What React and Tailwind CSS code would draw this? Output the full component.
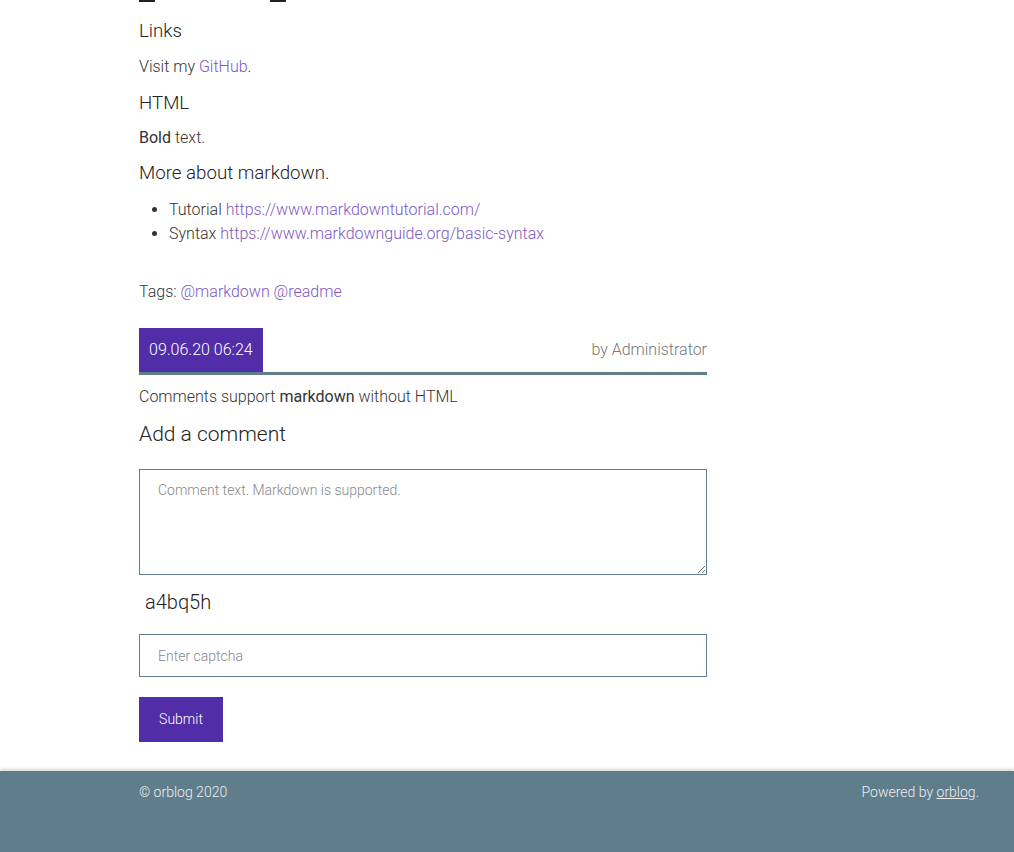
import React from 'react';

const linkCls = 'text-[#7e57c2] hover:underline';

export default function App() {
  return (
    <div className="min-h-[852px] flex flex-col bg-white font-['Roboto',sans-serif] font-light text-[#333]">
      <main className="flex-1 ml-[139px] w-[568px]">
        <div className="h-[2px] flex">
          <span className="w-[16px] bg-[#222]" />
          <span className="ml-[115px] w-[16px] bg-[#222]" />
        </div>

        <h3 className="mt-[17px] text-[18.72px] leading-6 font-light text-[#222]">Links</h3>
        <p className="mt-[12px] text-[16px] leading-6">
          Visit my <a href="#" className={linkCls}>GitHub</a>.
        </p>

        <h3 className="mt-[12px] text-[18.72px] leading-6 font-light text-[#222]">HTML</h3>
        <p className="mt-[11px] text-[16px] leading-6">
          <b className="font-normal">Bold</b> text.
        </p>

        <h3 className="mt-[11px] text-[18.72px] leading-6 font-light text-[#222]">More about markdown.</h3>
        <ul className="mt-[13px] pl-[30px] list-disc text-[16px] leading-6">
          <li>
            Tutorial <a href="#" className={linkCls}>https://www.markdowntutorial.com/</a>
          </li>
          <li>
            Syntax <a href="#" className={linkCls}>https://www.markdownguide.org/basic-syntax</a>
          </li>
        </ul>

        <p className="mt-[34px] text-[16px] leading-6">
          Tags: <a href="#" className={linkCls}>@markdown</a> <a href="#" className={linkCls}>@readme</a>
        </p>

        <div className="mt-[24px] flex items-center justify-between border-b-[3px] border-[#607d8b]">
          <span className="h-[44px] flex items-center px-[10px] bg-[#512da8] text-white text-[16px]">
            09.06.20 06:24
          </span>
          <span className="text-[16px] text-[#777]">by Administrator</span>
        </div>

        <p className="mt-[10px] text-[16px] leading-6">
          Comments support <b className="font-normal">markdown</b> without HTML
        </p>

        <h3 className="mt-[11px] text-[21px] leading-7 font-light text-[#222]">Add a comment</h3>

        <form className="flex flex-col">
          <textarea
            className="mt-[21px] h-[106px] w-full border border-[#607d8b] px-[18px] pt-[10px] text-[14px] leading-5 font-light placeholder:text-[#888] outline-none"
            placeholder="Comment text. Markdown is supported."
          />
          <div className="mt-[13px] pl-[6px] text-[20px] leading-7 font-light text-[#222]">a4bq5h</div>
          <input
            type="text"
            className="mt-[18px] h-[43px] w-full border border-[#607d8b] px-[18px] text-[14px] font-light placeholder:text-[#888] outline-none"
            placeholder="Enter captcha"
          />
          <div className="mt-[20px]">
            <button
              type="button"
              className="h-[45px] w-[84px] bg-[#512da8] text-white text-[14px] font-light"
            >
              Submit
            </button>
          </div>
        </form>
      </main>

      <footer className="mt-[29px] h-[81px] bg-[#607d8b] shadow-[0_-2px_3px_rgba(0,0,0,0.15)] text-[14px] leading-5 text-[#eceff1] font-light">
        <div className="ml-[139px] w-[840px] pt-[11px] flex justify-between">
          <span>© orblog 2020</span>
          <span>
            Powered by <a href="#" className="underline">orblog</a>.
          </span>
        </div>
      </footer>
    </div>
  );
}
